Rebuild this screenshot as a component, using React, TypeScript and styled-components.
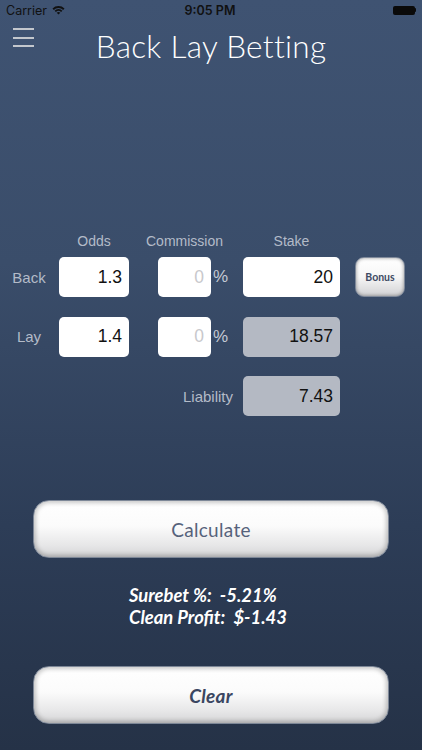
import styled, { createGlobalStyle } from "styled-components";

const GlobalStyle = createGlobalStyle`
    html, body {
        margin: 0;
        padding: 0;
    }
    body {
        width: 422px;
        height: 750px;
        overflow: hidden;
    }
`;

export default function App() {
    return (
        <>
            <GlobalStyle />
            <Screen>
                <StatusBar>
                    <Carrier>
                        Carrier
                        <svg width="13" height="10" viewBox="0 0 13 10">
                            <path d="M0.5 3.6 A8.5 8.5 0 0 1 12.5 3.6 L11.2 4.9 A6.6 6.6 0 0 0 1.8 4.9 Z" fill="#111" />
                            <path d="M2.6 5.7 A5.6 5.6 0 0 1 10.4 5.7 L9.1 7 A3.8 3.8 0 0 0 3.9 7 Z" fill="#111" />
                            <path d="M4.7 7.8 A2.6 2.6 0 0 1 8.3 7.8 L6.5 9.6 Z" fill="#111" />
                        </svg>
                    </Carrier>
                    <Clock>9:05 PM</Clock>
                    <Battery>
                        <BatteryBody />
                        <BatteryNub />
                    </Battery>
                </StatusBar>

                <Header>
                    <Hamburger>
                        <span />
                        <span />
                        <span />
                    </Hamburger>
                    <Title>Back Lay Betting</Title>
                    <div />
                </Header>

                <Form>
                    <ColHead $col={2}>Odds</ColHead>
                    <ColHead $col={4}>Commission</ColHead>
                    <ColHead $col={6}>Stake</ColHead>

                    <RowLabel $row={2}>Back</RowLabel>
                    <Field $row={2} $col={2}>1.3</Field>
                    <Field $row={2} $col={4} $placeholder>0</Field>
                    <Percent $row={2} $col={5}>%</Percent>
                    <Field $row={2} $col={6}>20</Field>
                    <BonusButton>Bonus</BonusButton>

                    <RowLabel $row={3}>Lay</RowLabel>
                    <Field $row={3} $col={2}>1.4</Field>
                    <Field $row={3} $col={4} $placeholder>0</Field>
                    <Percent $row={3} $col={5}>%</Percent>
                    <Field $row={3} $col={6} $readonly>18.57</Field>

                    <LiabilityLabel>Liability</LiabilityLabel>
                    <Field $row={4} $col={6} $readonly>7.43</Field>
                </Form>

                <BigButton>Calculate</BigButton>

                <Results>
                    <div>Surebet %:&nbsp; -5.21%</div>
                    <div>Clean Profit:&nbsp; $-1.43</div>
                </Results>

                <BigButton $strong>Clear</BigButton>
            </Screen>
        </>
    );
}

const Screen = styled.div`
    width: 422px;
    height: 750px;
    display: flex;
    flex-direction: column;
    background: linear-gradient(180deg, #3f5372 0%, #3a4d6a 35%, #2d3d57 70%, #253247 100%);
    font-family: "Liberation Sans", Arial, sans-serif;
    overflow: hidden;
`;

const StatusBar = styled.div`
    height: 20px;
    display: grid;
    grid-template-columns: 1fr auto 1fr;
    align-items: center;
    padding: 0 6px;
    font-family: Inter, "Liberation Sans", sans-serif;
    font-size: 12.5px;
    color: #111;
`;

const Carrier = styled.div`
    display: flex;
    align-items: center;
    gap: 5px;
`;

const Clock = styled.div`
    font-weight: 600;
    margin-left: -2px;
`;

const Battery = styled.div`
    justify-self: end;
    display: flex;
    align-items: center;
`;

const BatteryBody = styled.div`
    width: 22px;
    height: 9px;
    border-radius: 2px;
    background: #0a0a0a;
`;

const BatteryNub = styled.div`
    width: 1.5px;
    height: 4px;
    background: #0a0a0a;
    border-radius: 0 1px 1px 0;
`;

const Header = styled.div`
    height: 52px;
    display: grid;
    grid-template-columns: 1fr auto 1fr;
    align-items: start;
`;

const Hamburger = styled.div`
    display: flex;
    flex-direction: column;
    gap: 6.5px;
    width: 21px;
    margin: 8px 0 0 13px;

    span {
        display: block;
        height: 2px;
        background: #c3c7cd;
    }
`;

const Title = styled.h1`
    margin: 7px 0 0;
    font-family: Lato, "Noto Sans", sans-serif;
    font-weight: 300;
    font-size: 31.5px;
    color: #ffffff;
    letter-spacing: 0.3px;
`;

/* the header row is short: its labels hang into the gap above the first row of fields */
const Form = styled.div`
    margin-top: 157px;
    display: grid;
    grid-template-columns: 59px 70px 29px 53px 32px 97px 15px 50px;
    grid-template-rows: 8.5px 40px 40px 40px;
    row-gap: 19.5px;
    align-items: stretch;
`;

const ColHead = styled.div<{ $col: number }>`
    grid-row: 1;
    grid-column: ${(p) => p.$col};
    align-self: start;
    height: 24px;
    line-height: 24px;
    text-align: center;
    white-space: nowrap;
    font-size: 14px;
    color: #b3bbc8;
    justify-self: center;
`;

const RowLabel = styled.div<{ $row: number }>`
    grid-row: ${(p) => p.$row};
    grid-column: 1;
    display: flex;
    align-items: center;
    justify-content: center;
    padding-right: 1px;
    font-size: 15px;
    color: #b3bbc8;
`;

const LiabilityLabel = styled.div`
    grid-row: 4;
    grid-column: 1 / 6;
    display: flex;
    align-items: center;
    justify-content: flex-end;
    padding-right: 10px;
    font-size: 15px;
    color: #b3bbc8;
`;

const Field = styled.div<{ $row: number; $col: number; $placeholder?: boolean; $readonly?: boolean }>`
    grid-row: ${(p) => p.$row};
    grid-column: ${(p) => p.$col};
    display: flex;
    align-items: center;
    justify-content: flex-end;
    padding-right: 7px;
    border-radius: 5px;
    background: ${(p) => (p.$readonly ? "#b4b9c3" : "#ffffff")};
    color: ${(p) => (p.$placeholder ? "#c8c8cc" : "#111111")};
    font-size: 17.5px;
`;

const Percent = styled.div<{ $row: number; $col: number }>`
    grid-row: ${(p) => p.$row};
    grid-column: ${(p) => p.$col};
    display: flex;
    align-items: center;
    padding-left: 2px;
    font-size: 17px;
    color: #c4cad4;
`;

const BonusButton = styled.button`
    grid-column: 8;
    grid-row: 2;
    border: 1px solid #7f899a;
    border-radius: 9px;
    background: linear-gradient(180deg, #ffffff 0%, #f6f6f6 50%, #d2d2d4 100%);
    box-shadow: inset 0 0 3px 1px rgba(0, 0, 0, 0.25);
    font-family: Lato, "Noto Sans", sans-serif;
    font-weight: 700;
    font-size: 10.5px;
    color: #3e4a63;
    padding: 0;
`;

const BigButton = styled.button<{ $strong?: boolean }>`
    align-self: center;
    width: 356px;
    height: 58px;
    margin-top: ${(p) => (p.$strong ? "38px" : "84px")};
    border: 1px solid #7d8797;
    border-radius: 16px;
    background: linear-gradient(180deg, #ffffff 0%, #fbfbfb 45%, #e6e6e7 80%, #d4d4d6 100%);
    box-shadow: inset 0 0 4px 2px rgba(0, 0, 0, 0.22);
    font-family: Lato, "Noto Sans", sans-serif;
    font-size: 19px;
    font-weight: ${(p) => (p.$strong ? 700 : 400)};
    font-style: ${(p) => (p.$strong ? "italic" : "normal")};
    color: ${(p) => (p.$strong ? "#3a4661" : "#56627b")};
    letter-spacing: 0.3px;
`;

const Results = styled.div`
    margin: 26px 0 0 129px;
    font-family: Lato, "Noto Sans", sans-serif;
    font-style: italic;
    font-weight: 700;
    font-size: 18.4px;
    line-height: 22px;
    color: #ffffff;
    white-space: nowrap;
`;
